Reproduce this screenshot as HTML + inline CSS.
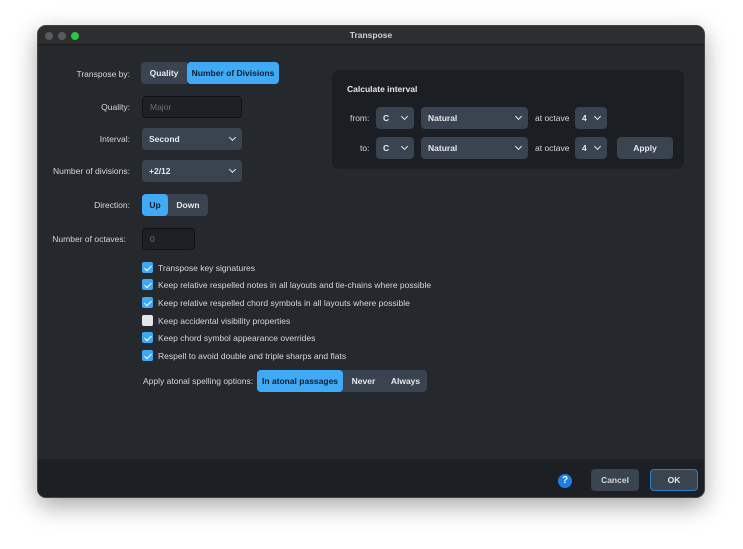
<!DOCTYPE html><html><head><style>
*{box-sizing:border-box;margin:0;padding:0}
body{width:743px;height:549px;background:#fff;font-family:"Liberation Sans",sans-serif;font-size:8.5px;color:#d3d6db;position:relative;overflow:hidden}
.win{position:absolute;left:37px;top:25px;width:668px;height:473px;background:#25292e;border-radius:9px;overflow:hidden;box-shadow:0 8px 24px rgba(0,0,0,.35);border:1px solid #444}
.tb{position:absolute;left:0;top:0;width:100%;height:19px;background:#2d2e30;border-bottom:1px solid #1a1a1a;text-align:center;line-height:19px;font-weight:bold;color:#cfd0d2;font-size:8.5px}
.dot{position:absolute;top:6px;width:8px;height:8px;border-radius:50%;background:#5a5b5d}
.a{position:absolute}
.lbl{position:absolute;text-align:right;width:120px;left:-28px}
.box{position:absolute;background:#3a4350;border-radius:4px;height:22px;line-height:22px;padding-left:7px;color:#e6e8eb;font-weight:600}
.fld{position:absolute;background:#1d2024;border:1px solid #0f1113;border-radius:4px;height:22px;line-height:20px;padding-left:7px;color:#6b7078}
.blue{background:#41aaf7;color:#0f1c2a}
.chev{position:absolute;right:7px;top:7px;width:5px;height:5px;border-right:1.5px solid #e6e8eb;border-bottom:1.5px solid #e6e8eb;transform:rotate(45deg)}
.cb{position:absolute;left:104px;width:11px;height:11px;border-radius:2px;background:#3ea8f5}
.cb::after{content:"";position:absolute;left:3.5px;top:1.5px;width:3px;height:6px;border-right:1.5px solid #fff;border-bottom:1.5px solid #fff;transform:rotate(45deg)}
.cb.off{background:#e4e6e9}.cb.off::after{display:none}
.ct{position:absolute;left:120px}
.c{text-align:center;padding:0}
</style></head><body>
<div class="win">
<div class="tb">Transpose</div>
<div class="dot" style="left:7px"></div><div class="dot" style="left:20px"></div><div class="dot" style="left:33px;background:#2ac840"></div>

<div class="lbl" style="top:43px">Transpose by:</div>
<div class="box c" style="left:103px;top:36px;width:46px;border-radius:4px 0 0 4px">Quality</div>
<div class="box c blue" style="left:149px;top:36px;width:92px">Number of Divisions</div>

<div class="lbl" style="top:76px">Quality:</div>
<div class="fld" style="left:104px;top:70px;width:100px;font-weight:normal">Major</div>

<div class="lbl" style="top:108px">Interval:</div>
<div class="box" style="left:104px;top:102px;width:100px">Second<div class="chev"></div></div>

<div class="lbl" style="top:140px">Number of divisions:</div>
<div class="box" style="left:104px;top:134px;width:100px">+2/12<div class="chev"></div></div>

<div class="lbl" style="top:174px">Direction:</div>
<div class="box c" style="left:104px;top:168px;width:66px"></div>
<div class="box c blue" style="left:104px;top:168px;width:26px">Up</div>
<div class="box c" style="left:130px;top:168px;width:40px;background:none">Down</div>

<div class="lbl" style="top:208px;left:-32px">Number of octaves:</div>
<div class="fld" style="left:104px;top:202px;width:53px">0</div>

<div class="cb" style="top:236px"></div><div class="ct" style="top:237px">Transpose key signatures</div>
<div class="cb" style="top:253px"></div><div class="ct" style="top:254px">Keep relative respelled notes in all layouts and tie-chains where possible</div>
<div class="cb" style="top:271px"></div><div class="ct" style="top:272px">Keep relative respelled chord symbols in all layouts where possible</div>
<div class="cb off" style="top:289px"></div><div class="ct" style="top:290px">Keep accidental visibility properties</div>
<div class="cb" style="top:306px"></div><div class="ct" style="top:307px">Keep chord symbol appearance overrides</div>
<div class="cb" style="top:324px"></div><div class="ct" style="top:325px">Respell to avoid double and triple sharps and flats</div>

<div class="a" style="left:105px;top:350px">Apply atonal spelling options:</div>
<div class="box c" style="left:219px;top:344px;width:170px"></div>
<div class="box c blue" style="left:219px;top:344px;width:86px">In atonal passages</div>
<div class="box c" style="left:305px;top:344px;width:41px;background:none">Never</div>
<div class="box c" style="left:346px;top:344px;width:43px;background:none">Always</div>

<div class="a" style="left:294px;top:44px;width:352px;height:99px;background:#1b1e22;border-radius:7px">
<div class="a" style="left:15px;top:14px;font-weight:600;color:#e6e8eb">Calculate interval</div>
<div class="a" style="left:18px;top:43px">from:</div>
<div class="box" style="left:44px;top:37px;width:38px">C<div class="chev"></div></div>
<div class="box" style="left:89px;top:37px;width:107px">Natural<div class="chev"></div></div>
<div class="a" style="left:203px;top:43px">at octave</div>
<div class="box" style="left:243px;top:37px;width:32px">4<div class="chev"></div></div>
<div class="a" style="left:28px;top:73px">to:</div>
<div class="box" style="left:44px;top:67px;width:38px">C<div class="chev"></div></div>
<div class="box" style="left:89px;top:67px;width:107px">Natural<div class="chev"></div></div>
<div class="a" style="left:203px;top:73px">at octave</div>
<div class="box" style="left:243px;top:67px;width:32px">4<div class="chev"></div></div>
<div class="box c" style="left:285px;top:67px;width:56px">Apply</div>
</div>

<div class="a" style="left:0;top:433px;width:100%;height:40px;background:#1c1f23"></div>
<div class="a" style="left:520px;top:448px;width:14px;height:14px;border-radius:50%;background:#1a7fe0;color:#fff;font-weight:bold;text-align:center;line-height:14px;font-size:10px">?</div>
<div class="box c" style="left:553px;top:443px;width:48px;color:#d3d6db">Cancel</div>
<div class="box c" style="left:612px;top:443px;width:48px;border:1px solid #2a7fc8;line-height:20px">OK</div>
</div>
</body></html>
